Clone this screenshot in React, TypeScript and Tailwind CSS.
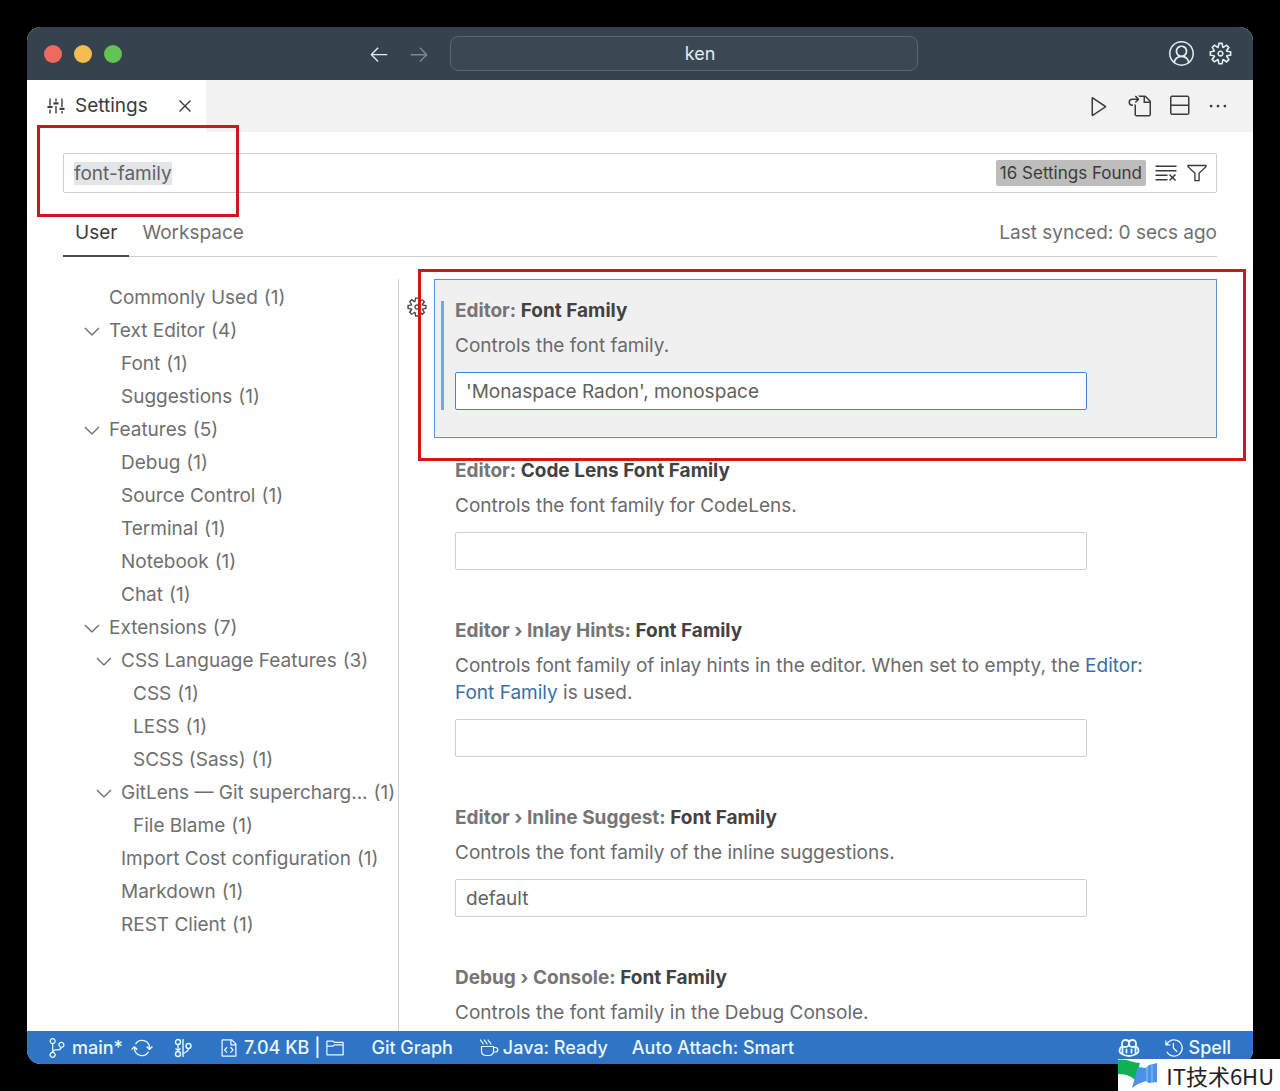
import React, { useEffect, useRef, useState } from 'react';
import {
  VscAccount,
  VscArrowLeft,
  VscArrowRight,
  VscChevronDown,
  VscClearAll,
  VscClose,
  VscEllipsis,
  VscFileCode,
  VscFilter,
  VscFolder,
  VscGear,
  VscGoToFile,
  VscHistory,
  VscPlay,
  VscSourceControl,
  VscSplitVertical,
  VscSync,
} from 'react-icons/vsc';

type TocEntry = {
  label: string;
  count: number;
  level: 1 | 2 | 3;
  open?: boolean;
};

type Setting = {
  id: string;
  scope: string;
  name: string;
  description: React.ReactNode;
  value: string;
  active?: boolean;
};

const toc: TocEntry[] = [
  { label: 'Commonly Used', count: 1, level: 1 },
  { label: 'Text Editor', count: 4, level: 1, open: true },
  { label: 'Font', count: 1, level: 2 },
  { label: 'Suggestions', count: 1, level: 2 },
  { label: 'Features', count: 5, level: 1, open: true },
  { label: 'Debug', count: 1, level: 2 },
  { label: 'Source Control', count: 1, level: 2 },
  { label: 'Terminal', count: 1, level: 2 },
  { label: 'Notebook', count: 1, level: 2 },
  { label: 'Chat', count: 1, level: 2 },
  { label: 'Extensions', count: 7, level: 1, open: true },
  { label: 'CSS Language Features', count: 3, level: 2, open: true },
  { label: 'CSS', count: 1, level: 3 },
  { label: 'LESS', count: 1, level: 3 },
  { label: 'SCSS (Sass)', count: 1, level: 3 },
  { label: 'GitLens — Git supercharg...', count: 1, level: 2, open: true },
  { label: 'File Blame', count: 1, level: 3 },
  { label: 'Import Cost configuration', count: 1, level: 2 },
  { label: 'Markdown', count: 1, level: 2 },
  { label: 'REST Client', count: 1, level: 2 },
];

const levelPadding = {
  1: 'pl-[53px]',
  2: 'pl-[65px]',
  3: 'pl-[77px]',
};

const settings: Setting[] = [
  {
    id: 'editor-font-family',
    scope: 'Editor:',
    name: 'Font Family',
    description: 'Controls the font family.',
    value: "'Monaspace Radon', monospace",
    active: true,
  },
  {
    id: 'code-lens-font-family',
    scope: 'Editor:',
    name: 'Code Lens Font Family',
    description: 'Controls the font family for CodeLens.',
    value: '',
  },
  {
    id: 'inlay-hints-font-family',
    scope: 'Editor › Inlay Hints:',
    name: 'Font Family',
    description: (
      <>
        Controls font family of inlay hints in the editor. When set to empty, the{' '}
        <a href="#editor-font-family" className="text-[#3a6ea5]">Editor: Font Family</a> is used.
      </>
    ),
    value: '',
  },
  {
    id: 'inline-suggest-font-family',
    scope: 'Editor › Inline Suggest:',
    name: 'Font Family',
    description: 'Controls the font family of the inline suggestions.',
    value: 'default',
  },
  {
    id: 'console-font-family',
    scope: 'Debug › Console:',
    name: 'Font Family',
    description: 'Controls the font family in the Debug Console.',
    value: 'default',
  },
];

const SlidersIcon = () => (
  <svg viewBox="0 0 18 18" className="size-[18px]" fill="none" stroke="currentColor" strokeWidth="1.4">
    <path d="M3 1.500v7M3 12.500v4M9 1.500v3M9 9v7.500M15 1.500v8.500M15 14v2.500" />
    <path d="M.5 10h5M6.500 6.300h5M12.500 11.800h5" strokeWidth="2.2" />
  </svg>
);

const CupIcon = () => (
  <svg viewBox="0 0 20 20" className="size-5" fill="none" stroke="currentColor" strokeWidth="1.2">
    <path d="M2.500 8.500h12v4.500a5 4.500 0 0 1-4 4.500h-4a5 4.500 0 0 1-4-4.500z" />
    <path d="M14.500 9.500h2a2.200 2.200 0 0 1 0 4.500h-2" />
    <path d="M1.500 1.500c0 2.500 2.700 2 2.700 5M5.300 1.500c0 2.500 2.700 2 2.700 5M9.100 1.500c0 2.500 2.700 2 2.700 5" />
  </svg>
);

const GraphIcon = () => (
  <svg viewBox="0 0 20 20" className="size-5" fill="none" stroke="currentColor" strokeWidth="1.4">
    <circle cx="5" cy="4" r="2.500" />
    <circle cx="5" cy="16" r="2.500" />
    <circle cx="15.500" cy="8" r="2.500" />
    <path d="M5 6.500v7M10 1v18M15.500 10.500c0 3.300-2.500 2.500-5.500 5.500M2.500 10.500l2.500 2 2.500-2" />
  </svg>
);

const CopilotIcon = () => (
  <svg viewBox="0 0 22 20" className="h-5 w-[22px]" fill="none" stroke="currentColor" strokeWidth="1.8">
    <path d="M4 8.2C3.600 4 4.500 2 7.500 2 10.300 2 11 3.200 11 5.500S10 9 7.300 9C5 9 4 8.700 4 7zM18 8.200C18.400 4 17.500 2 14.500 2 11.700 2 11 3.200 11 5.500S12 9 14.700 9C17 9 18 8.700 18 7z" />
    <path d="M3.800 8.500C2 9.500 1.500 11 1.500 13.500c0 1.500 4.500 4.500 9.500 4.500s9.500-3 9.500-4.500c0-2.500-.5-4-2.300-5M4.500 9v6.500M17.500 9v6.500" />
    <path d="M8.500 11.500v3M13.500 11.500v3" strokeLinecap="round" />
  </svg>
);

const TitleBar = () => (
  <header className="grid h-[53px] shrink-0 grid-cols-[1fr_auto_1fr] items-center bg-[#36434f] text-[#e3ecf5]">
    <div className="flex gap-3 pl-[17px]">
      <span className="size-[18px] rounded-full bg-[#ee6a5f]" />
      <span className="size-[18px] rounded-full bg-[#f5bd4f]" />
      <span className="size-[18px] rounded-full bg-[#61c455]" />
    </div>
    <div className="flex items-center pl-[6px]">
      <button type="button" aria-label="Go back" className="mr-[18px]">
        <VscArrowLeft className="size-[22px]" />
      </button>
      <button type="button" aria-label="Go forward" className="mr-5 text-[#7d8892]">
        <VscArrowRight className="size-[22px]" />
      </button>
      <button
        type="button"
        className="h-[35px] w-[468px] rounded-lg border border-[#5a6672] bg-[#3b4854] pl-8 text-lg leading-6"
      >
        ken
      </button>
    </div>
    <div className="flex justify-end gap-[14px] pr-5">
      <button type="button" aria-label="Accounts">
        <VscAccount className="size-[25px]" />
      </button>
      <button type="button" aria-label="Manage">
        <VscGear className="size-[25px]" />
      </button>
    </div>
  </header>
);

const TabBar = () => (
  <div className="flex h-[52px] shrink-0 items-center justify-between bg-[#f2f2f2] text-[#3b3b3b]">
    <div className="flex h-full items-center bg-white pr-[10px] pl-5">
      <SlidersIcon />
      <span className="ml-[10px] text-[19px]">Settings</span>
      <button type="button" aria-label="Close tab" className="ml-[26px]">
        <VscClose className="size-[22px]" />
      </button>
    </div>
    <div className="flex items-center gap-4 pr-6">
      <button type="button" aria-label="Run">
        <VscPlay className="size-6" />
      </button>
      <button type="button" aria-label="Open settings file">
        <VscGoToFile className="size-6" />
      </button>
      <button type="button" aria-label="Split editor">
        <VscSplitVertical className="size-6" />
      </button>
      <button type="button" aria-label="More actions">
        <VscEllipsis className="size-[22px]" />
      </button>
    </div>
  </div>
);

const SearchBox = () => {
  const [query, setQuery] = useState('font-family');
  const inputRef = useRef<HTMLInputElement>(null);

  useEffect(() => {
    inputRef.current?.focus();
    inputRef.current?.select();
  }, []);

  return (
    <div className="relative mx-9 mt-[21px] flex h-10 shrink-0 items-center rounded-xs border border-[#cecece] pr-2 pl-[10px]">
      <input
        ref={inputRef}
        type="text"
        aria-label="Search settings"
        value={query}
        onChange={(e) => setQuery(e.target.value)}
        className="h-8 min-w-0 flex-1 text-[19px] leading-[30px] text-[#616161] outline-none selection:bg-[#e2e6e9] selection:text-[#616161]"
      />
      <span className="mr-2 rounded-xs bg-[#bdbdbd] px-1 text-[17px] leading-[26px] text-[#3b3b3b]">
        16 Settings Found
      </span>
      <button type="button" aria-label="Clear search" className="mr-2 text-[#3b3b3b]">
        <VscClearAll className="size-6" />
      </button>
      <button type="button" aria-label="Filter settings" className="text-[#3b3b3b]">
        <VscFilter className="size-[22px]" />
      </button>
      <div className="pointer-events-none absolute -top-[29px] -left-[27px] h-[92px] w-[202px] border-3 border-[#d3161a]" />
    </div>
  );
};

const ScopeTabs = () => (
  <div className="mx-9 mt-[15px] flex h-[49px] shrink-0 border-b border-[#cecece] text-[19px] leading-[49px]">
    <button type="button" className="-mb-px border-b-2 border-[#4a4a4a] px-3 text-[#3b3b3b]">
      User
    </button>
    <button type="button" className="px-[13px] text-[#6f6f6f]">Workspace</button>
    <span className="ml-auto text-[#6f6f6f]">Last synced: 0 secs ago</span>
  </div>
);

const TableOfContents = () => (
  <nav aria-label="Settings groups" className="w-[372px] shrink-0 border-r border-[#cecece]">
    <ul className="pt-[2px] text-[19px] leading-[33px] text-[#6f6f6f]">
      {toc.map((entry) => (
        <li key={entry.label} className={`flex items-center whitespace-nowrap ${levelPadding[entry.level]}`}>
          <span className="mr-[5px] flex w-6 shrink-0">
            {entry.open && <VscChevronDown className="size-6" />}
          </span>
          <span>{entry.label}</span>
          <span className="ml-[6px]">({entry.count})</span>
        </li>
      ))}
    </ul>
  </nav>
);

const SettingItem = ({ setting }: { setting: Setting }) => {
  const [value, setValue] = useState(setting.value);

  return (
    <div className="relative flex pr-9 pl-[7px]">
      <div className="w-7 shrink-0 pt-[17px]">
        {setting.active && (
          <button type="button" aria-label="More actions for this setting" className="text-[#4a4a4a]">
            <VscGear className="size-[22px]" />
          </button>
        )}
      </div>
      <div
        className={`mb-px flex min-w-0 flex-1 gap-[11px] border pt-[17px] pb-[27px] pl-[6px] ${
          setting.active ? 'border-[#5c93cf] bg-[#f0f0f0]' : 'border-transparent'
        }`}
      >
        <div className={`mt-1 w-[3px] shrink-0 ${setting.active ? 'bg-[#77a9d6]' : ''}`} />
        <div className="min-w-0 flex-1 pr-[50px]">
          <label htmlFor={setting.id} className="block text-[19px] leading-[27px] font-bold text-[#424242]">
            <span className="text-[#757575]">{setting.scope}</span> {setting.name}
          </label>
          <p className="mt-2 text-[19px] leading-[27px] text-[#6a6a6a]">{setting.description}</p>
          <input
            id={setting.id}
            type="text"
            value={value}
            onChange={(e) => setValue(e.target.value)}
            className={`mt-[13px] block h-[38px] w-[632px] max-w-full rounded-xs border bg-white px-[10px] text-[19px] text-[#616161] outline-none ${
              setting.active ? 'border-[#4584cc]' : 'border-[#cecece]'
            }`}
          />
        </div>
      </div>
      {setting.active && (
        <div className="pointer-events-none absolute -top-[10px] right-[7px] left-[19px] h-[192px] border-3 border-[#d3161a]" />
      )}
    </div>
  );
};

const StatusBar = () => (
  <footer className="flex h-[33px] shrink-0 items-center bg-[#3074c6] pr-[22px] pl-5 text-lg font-medium whitespace-nowrap text-[#e8f7ff]">
    <button type="button" className="flex items-center gap-[5px]">
      <VscSourceControl className="size-5" />
      main*
    </button>
    <button type="button" aria-label="Synchronize changes" className="ml-2">
      <VscSync className="size-[22px]" />
    </button>
    <button type="button" aria-label="Commit graph" className="ml-5">
      <GraphIcon />
    </button>
    <button type="button" className="ml-[26px] flex items-center gap-[5px]">
      <VscFileCode className="size-5" />
      7.04 KB |
      <VscFolder className="size-5" />
    </button>
    <button type="button" className="ml-[26px]">Git Graph</button>
    <button type="button" className="ml-[26px] flex items-center gap-1">
      <CupIcon />
      Java: Ready
    </button>
    <button type="button" className="ml-6">Auto Attach: Smart</button>
    <button type="button" aria-label="Copilot" className="ml-auto">
      <CopilotIcon />
    </button>
    <button type="button" className="ml-6 flex items-center gap-[5px]">
      <VscHistory className="size-5" />
      Spell
    </button>
  </footer>
);

const Watermark = () => (
  <div className="absolute right-0 bottom-0 flex h-8 items-center overflow-hidden bg-white pr-[6px] font-['Noto_Sans_CJK_SC',sans-serif] text-[22px] leading-7 text-[#222222]">
    <svg viewBox="0 0 40 32" className="mr-2 h-8 w-10">
      <path d="M0 1C8-1 14 4 22 4L17 21C14 18 9 15 0 15z" fill="#12b055" />
      <path d="M20 8l8 1 3-3 8-2v19l-8 1-3-2-8 3-6 4z" fill="#4a92e6" />
      <path d="M29 8v14M34 6v17" stroke="#7bb4f2" strokeWidth="1.500" />
    </svg>
    IT技术6HU
  </div>
);

export default function App() {
  return (
    <div className="relative h-screen bg-black p-[27px] font-['Inter','Liberation_Sans',sans-serif]">
      <div className="flex h-full flex-col overflow-hidden rounded-[14px] bg-white">
        <TitleBar />
        <TabBar />
        <SearchBox />
        <ScopeTabs />
        <main className="flex min-h-0 flex-1 overflow-hidden pt-[22px]">
          <TableOfContents />
          <section aria-label="Settings" className="min-w-0 flex-1">
            {settings.map((setting) => (
              <SettingItem key={setting.id} setting={setting} />
            ))}
          </section>
        </main>
        <StatusBar />
      </div>
      <Watermark />
    </div>
  );
}
